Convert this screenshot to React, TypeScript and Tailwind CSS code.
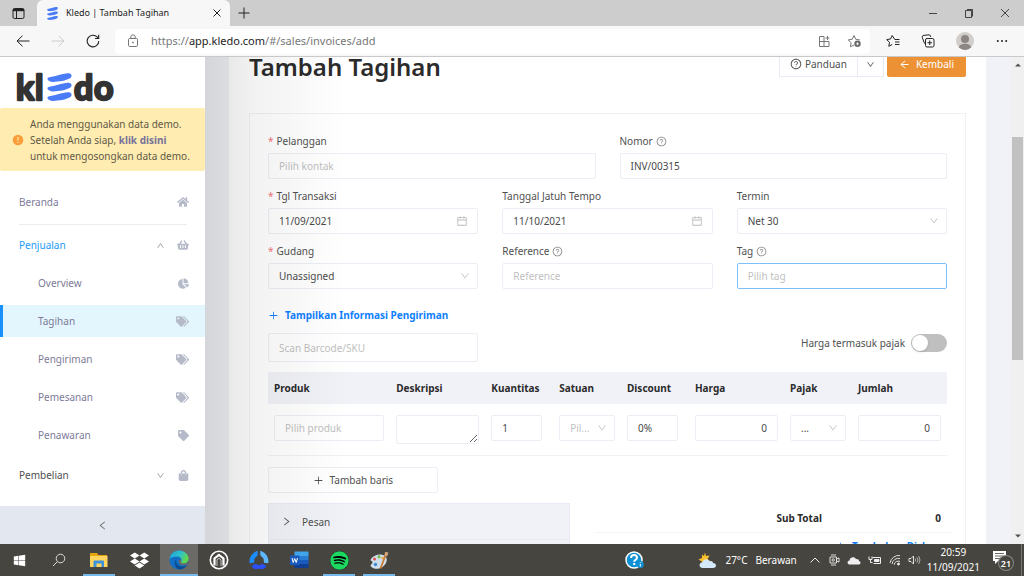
import { ReactNode, useState } from "react";
import { clsx } from "clsx";
import {
  FaChartPie,
  FaDropbox,
  FaHome,
  FaShoppingBag,
  FaShoppingBasket,
  FaSpotify,
  FaTag,
  FaTags,
  FaWindows,
} from "react-icons/fa";
import {
  AiOutlineArrowLeft,
  AiOutlineCalendar,
  AiOutlineDown,
  AiOutlineLeft,
  AiOutlinePlus,
  AiOutlineQuestionCircle,
  AiOutlineRight,
  AiOutlineUp,
} from "react-icons/ai";

const salesMenu = [
  { name: "Overview", icon: FaChartPie },
  { name: "Tagihan", icon: FaTags },
  { name: "Pengiriman", icon: FaTags },
  { name: "Pemesanan", icon: FaTags },
  { name: "Penawaran", icon: FaTag },
];

const columns = [
  "Produk",
  "Deskripsi",
  "Kuantitas",
  "Satuan",
  "Discount",
  "Harga",
  "Pajak",
  "Jumlah",
];

const inputStyle =
  "h-[26px] w-full rounded-xs border border-[#eceef5] bg-transparent px-2.5 text-[#4a4a4a] outline-none placeholder:text-[#bfbfbf]";

export default function App() {
  return (
    <div className="flex h-screen w-full flex-col overflow-hidden bg-white font-['Noto_Sans',sans-serif] text-[10px] leading-4 text-[#505050]">
      <TabStrip />
      <Toolbar />
      <div className="flex min-h-0 flex-1">
        <Sidebar />
        <main className="relative min-w-0 flex-1 overflow-hidden bg-[#f1f2f7] pr-[25px] pl-6">
          <InvoicePage />
          <div className="pointer-events-none absolute inset-y-0 left-0 w-36 bg-linear-to-r from-black/12 via-black/5 via-35% to-transparent" />
        </main>
        <Scrollbar />
      </div>
      <Taskbar />
    </div>
  );
}

function TabStrip() {
  return (
    <header className="flex h-[26px] shrink-0 items-center bg-[#cdcdcd] text-[#222]">
      <button aria-label="Tab actions" className="flex w-[37px] justify-center">
        <svg width="13" height="13" viewBox="0 0 13 13" fill="none" stroke="currentColor">
          <rect x="1" y="1.5" width="11" height="10" rx="1.5" />
          <path d="M1 3h11" strokeWidth="2.4" />
          <path d="M4.5 4v7.500" />
        </svg>
      </button>
      <div className="flex h-full w-[193px] items-center rounded-t-md bg-[#f7f7f7] pr-2 pl-2.5 text-[9px]">
        <Stripes className="h-[13px] w-[11px]" />
        <span className="ml-2 flex-1 truncate">Kledo | Tambah Tagihan</span>
        <button aria-label="Close tab">
          <svg width="10" height="10" viewBox="0 0 10 10" stroke="currentColor">
            <path d="M1.500 1.500l7 7M8.500 1.500l-7 7" />
          </svg>
        </button>
      </div>
      <button aria-label="New tab" className="ml-2">
        <svg width="12" height="12" viewBox="0 0 12 12" stroke="currentColor">
          <path d="M6 .5v11M.5 6h11" />
        </svg>
      </button>
      <div className="ml-auto flex items-center gap-[26px] pr-3.5">
        <button aria-label="Minimize">
          <svg width="10" height="10" viewBox="0 0 10 10" stroke="currentColor" strokeWidth=".8">
            <path d="M1 5.500h8" />
          </svg>
        </button>
        <button aria-label="Restore">
          <svg width="10" height="10" viewBox="0 0 10 10" fill="none" stroke="currentColor" strokeWidth=".8">
            <path d="M1.500 2.500h6v7h-6z" />
            <path d="M3 1.500h5.500v7" />
          </svg>
        </button>
        <button aria-label="Close">
          <svg width="10" height="10" viewBox="0 0 10 10" stroke="currentColor" strokeWidth=".8">
            <path d="M1 1l8 8M9 1l-8 8" />
          </svg>
        </button>
      </div>
    </header>
  );
}

function Toolbar() {
  return (
    <nav className="flex h-[31px] shrink-0 items-center border-b border-[#c9c9c9] bg-[#f7f7f7] text-[#222]">
      <button aria-label="Back" className="ml-4">
        <svg width="14" height="12" viewBox="0 0 14 12" fill="none" stroke="currentColor">
          <path d="M13.500 6H1M6.500 .7L1 6l5.500 5.300" />
        </svg>
      </button>
      <button aria-label="Forward" className="ml-[21px] text-[#ccc]">
        <svg width="14" height="12" viewBox="0 0 14 12" fill="none" stroke="currentColor">
          <path d="M.5 6H13M7.500 .7L13 6l-5.500 5.300" />
        </svg>
      </button>
      <button aria-label="Refresh" className="ml-[21px]">
        <svg width="14" height="14" viewBox="0 0 14 14" fill="none" stroke="currentColor" strokeWidth="1.100">
          <path d="M12.800 7a5.800 5.800 0 1 1-1.700-4.100L12.500 4.300" />
          <path d="M12.700 .8v3.700H9" />
        </svg>
      </button>
      <div className="ml-[15px] flex h-[25px] flex-1 items-center rounded-sm bg-white pr-2 pl-3 text-[#777]">
        <svg width="12" height="14" viewBox="0 0 12 14" fill="none" stroke="currentColor">
          <rect x="1.500" y="4.500" width="9" height="8" rx="1.200" />
          <path d="M3.800 4.500V3a2.200 2.200 0 0 1 4.400 0v1.500" />
          <circle cx="6" cy="8.500" r=".5" fill="currentColor" />
        </svg>
        <p className="ml-3 flex-1 text-[11px]">
          https://<span className="text-[#222]">app.kledo.com</span>/#/sales/invoices/add
        </p>
        <button aria-label="Apps">
          <svg width="13" height="13" viewBox="0 0 13 13" fill="none" stroke="currentColor">
            <path d="M1.500 1.500h4.500v10H1.500zM1.500 6.500h9.500v5H6M9.500 1v4M7.500 3h4" />
          </svg>
        </button>
        <button aria-label="Add to favorites" className="ml-4">
          <svg width="15" height="14" viewBox="0 0 15 14" fill="none" stroke="currentColor">
            <path d="M7 11l-3.600 1.800.7-4L1.200 5.900l4-.6L7 1.500l1.800 3.800 4 .6" />
            <circle cx="10.500" cy="9.800" r="3.200" fill="#666" stroke="none" />
            <path d="M10.500 8.200v3.200M8.900 9.800h3.200" stroke="#fff" strokeWidth=".8" />
          </svg>
        </button>
      </div>
      <div className="ml-4 flex items-center gap-[18px] pr-4">
        <button aria-label="Favorites">
          <svg width="14" height="14" viewBox="0 0 14 14" fill="none" stroke="currentColor">
            <path d="M8.500 5L6.200 1.500 4.500 5l-3.800.6 2.800 2.700-.7 4L6.200 10.500" />
            <path d="M8.500 5.500h5M9 8h4.500M9 10.500h4.500" />
          </svg>
        </button>
        <button aria-label="Collections" className="ml-[3px]">
          <svg width="14" height="14" viewBox="0 0 14 14" fill="none" stroke="currentColor">
            <rect x="4.500" y="4.500" width="8.500" height="8.500" rx="1.500" />
            <path d="M3.500 9.500L1.200 3.200Q1 2 2 1.500L8 .8Q9.500 .8 9.800 3M8.750 6.500v4.500M6.500 8.750H11" />
          </svg>
        </button>
        <button aria-label="Profile" className="ml-[3px] overflow-hidden rounded-full">
          <svg width="18" height="18" viewBox="0 0 18 18" fill="#8b8683">
            <rect width="18" height="18" fill="#d0cdca" />
            <circle cx="9" cy="7" r="4" />
            <ellipse cx="9" cy="15" rx="6" ry="3.200" />
          </svg>
        </button>
        <button aria-label="Menu" className="ml-1">
          <svg width="12" height="4" viewBox="0 0 12 4" fill="currentColor">
            <circle cx="1.800" cy="2" r="1" />
            <circle cx="6" cy="2" r="1" />
            <circle cx="10.200" cy="2" r="1" />
          </svg>
        </button>
      </div>
    </nav>
  );
}

function Stripes({ className }: { className?: string }) {
  return (
    <svg viewBox="0 0 25 28" className={className} fill="#4a7cf7" preserveAspectRatio="none">
      <path d="M1.500 4.500C7 3.500 15 .8 21 .2c4-.4 4.500 3.600 2 5.100-4 2.400-12 3.700-17.500 3.600C1 8.800-1 5.300 1.500 4.500z" />
      <path d="M1.500 14C7 13 15 10.300 21 9.700c4-.4 4.500 3.600 2 5.100-4 2.400-12 3.700-17.500 3.600C1 18.300-1 14.800 1.500 14z" />
      <path d="M1.500 23.500C7 22.500 15 19.800 21 19.200c4-.4 4.500 3.600 2 5.100-4 2.400-12 3.700-17.500 3.600-4.500-.1-6.500-3.600-4-4.400z" />
    </svg>
  );
}

function Sidebar() {
  const [open, setOpen] = useState(true);

  return (
    <aside className="flex w-[205px] shrink-0 flex-col bg-white text-[#7d7b99]">
      <a href="#home" aria-label="kledo" className="flex h-[51px] items-end pl-4">
        <svg width="102" height="48" viewBox="0 0 102 48" className="overflow-visible">
          <g
            fill="#333"
            stroke="#333"
            strokeWidth="2.4"
            strokeLinejoin="round"
            className="font-['Lato',sans-serif] text-[34px] font-bold"
          >
            <text x="0" y="40">k</text>
            <text x="19" y="40">l</text>
            <text x="58" y="40">d</text>
            <text x="78" y="40">o</text>
          </g>
          <svg x="31" y="13" width="25" height="28">
            <Stripes />
          </svg>
        </svg>
      </a>
      <div className="flex h-[63px] items-center rounded-xs bg-[#ffecb0] pl-3 text-[#5f5a48]">
        <svg width="12" height="12" viewBox="0 0 12 12" className="shrink-0">
          <circle cx="6" cy="6" r="5.300" fill="#fa9d3b" />
          <path d="M6 3v3.600M6 7.800V9" stroke="#ffecb0" strokeWidth="1.100" />
        </svg>
        <p className="ml-1.5 whitespace-nowrap">
          Anda menggunakan data demo.
          <br />
          Setelah Anda siap,{" "}
          <a href="#reset" className="font-bold text-[#77719a]">
            klik disini
          </a>
          <br />
          untuk mengosongkan data demo.
        </p>
      </div>
      <ul className="mt-[15px] flex-1">
        <li>
          <a href="#home" className="flex h-8 items-center pr-4 pl-[19px]">
            <span className="flex-1">Beranda</span>
            <FaHome size={12} className="text-[#b5bac9]" />
          </a>
        </li>
        <li className="mt-1.5 mr-[18px] mb-1 ml-[19px] border-b border-[#ebebf0]" />
        <li>
          <button
            onClick={() => setOpen(!open)}
            className="flex h-8 w-full items-center pr-4 pl-[19px] text-left text-[#1c9bf7]"
          >
            <span className="flex-1">Penjualan</span>
            {open ? (
              <AiOutlineUp size={9} className="text-[#999]" />
            ) : (
              <AiOutlineDown size={9} className="text-[#999]" />
            )}
            <FaShoppingBasket size={12} className="ml-3 text-[#b5bac9]" />
          </button>
          {open && (
            <ul className="mt-1.5 flex flex-col gap-1.5">
              {salesMenu.map(({ name, icon: Icon }) => (
                <li key={name}>
                  <a
                    href={`#${name}`}
                    className={clsx(
                      "flex h-8 items-center border-l-3 pr-4 pl-[35px]",
                      name === "Tagihan" ? "border-[#1890ff] bg-[#e3f6fe]" : "border-transparent",
                    )}
                  >
                    <span className="flex-1">{name}</span>
                    <Icon
                      size={name === "Overview" || name === "Penawaran" ? 11 : 13}
                      className="text-[#b5bac9]"
                    />
                  </a>
                </li>
              ))}
            </ul>
          )}
        </li>
        <li className="mt-2">
          <button className="flex h-8 w-full items-center pr-4 pl-[19px] text-left text-[#505050]">
            <span className="flex-1">Pembelian</span>
            <AiOutlineDown size={9} className="text-[#999]" />
            <FaShoppingBag size={11} className="ml-[13px] text-[#b5bac9]" />
          </button>
        </li>
      </ul>
      <button
        aria-label="Collapse"
        className="flex h-[38px] shrink-0 items-center justify-center bg-[#e2e7f0] text-[#666]"
      >
        <AiOutlineLeft size={11} />
      </button>
    </aside>
  );
}

function Field({
  id,
  label,
  required,
  help,
  children,
}: {
  id: string;
  label: string;
  required?: boolean;
  help?: boolean;
  children: ReactNode;
}) {
  return (
    <div className="flex flex-col gap-1">
      <label htmlFor={id} className="flex items-center gap-[3px]">
        {required && <span className="text-[#f5767a]">*</span>}
        {label}
        {help && <AiOutlineQuestionCircle size={11} className="text-[#888]" />}
      </label>
      {children}
    </div>
  );
}

function DateInput({ id, value }: { id: string; value: string }) {
  return (
    <div className="relative">
      <input id={id} defaultValue={value} className={inputStyle} />
      <AiOutlineCalendar size={12} className="absolute top-[7px] right-2.5 text-[#bbb]" />
    </div>
  );
}

function Select({ id, label, value, muted }: { id: string; label?: string; value: string; muted?: boolean }) {
  return (
    <div className="relative">
      <select
        id={id}
        aria-label={label}
        className={clsx(inputStyle, "appearance-none", muted && "text-[#bfbfbf]!")}
      >
        <option>{value}</option>
      </select>
      <AiOutlineDown
        size={10}
        className="pointer-events-none absolute top-2 right-2 text-[#bbb]"
      />
    </div>
  );
}

function InvoicePage() {
  return (
    <div className="-mt-2 box-content h-full bg-white px-5 pb-2">
      <div className="flex h-9 items-start justify-between">
        <h1 className="text-[24px] leading-9 font-semibold text-[#2b2b2b]">Tambah Tagihan</h1>
        <div className="flex">
          <button className="flex h-7 items-center gap-[3px] border border-[#e8ebf3] px-2.5 pt-0.5">
            <AiOutlineQuestionCircle size={12} />
            Panduan
          </button>
          <button
            aria-label="More guides"
            className="-ml-px h-7 border border-[#e8ebf3] px-2 pt-0.5"
          >
            <AiOutlineDown size={9} />
          </button>
          <button className="ml-[3px] flex h-7 items-center gap-1.5 rounded-xs bg-[#ec9235] px-3 pt-0.5 text-white">
            <AiOutlineArrowLeft size={11} />
            Kembali
          </button>
        </div>
      </div>

      <form className="mt-7 border border-[#f0f1f5] px-[18px] pt-[19px]">
        <div className="grid grid-cols-2 gap-x-6">
          <Field id="contact" label="Pelanggan" required>
            <input id="contact" placeholder="Pilih kontak" className={inputStyle} />
          </Field>
          <Field id="number" label="Nomor" help>
            <input id="number" defaultValue="INV/00315" className={inputStyle} />
          </Field>
        </div>
        <div className="mt-[9px] grid grid-cols-3 gap-x-6 gap-y-[9px]">
          <Field id="date" label="Tgl Transaksi" required>
            <DateInput id="date" value="11/09/2021" />
          </Field>
          <Field id="due" label="Tanggal Jatuh Tempo">
            <DateInput id="due" value="11/10/2021" />
          </Field>
          <Field id="term" label="Termin">
            <Select id="term" value="Net 30" />
          </Field>
          <Field id="warehouse" label="Gudang" required>
            <Select id="warehouse" value="Unassigned" />
          </Field>
          <Field id="reference" label="Reference" help>
            <input id="reference" placeholder="Reference" className={inputStyle} />
          </Field>
          <Field id="tag" label="Tag" help>
            <input
              id="tag"
              placeholder="Pilih tag"
              className={clsx(inputStyle, "border-[#7cc0fa]!")}
            />
          </Field>
        </div>

        <button
          type="button"
          className="mt-[17px] flex h-[18px] items-center gap-1.5 font-bold text-[#0f7fff]"
        >
          <AiOutlinePlus size={11} />
          Tampilkan Informasi Pengiriman
        </button>

        <div className="mt-[9px] grid grid-cols-3 items-start gap-x-6">
          <input
            aria-label="Scan Barcode/SKU"
            placeholder="Scan Barcode/SKU"
            className={clsx(inputStyle, "h-[29px]!")}
          />
          <label className="col-span-2 flex h-5 items-center justify-end gap-1.5">
            Harga termasuk pajak
            <input
              type="checkbox"
              role="switch"
              className="h-[18px] w-9 appearance-none rounded-full bg-[#bfbfbf] p-px before:block before:size-4 before:rounded-full before:bg-white before:shadow-sm checked:bg-[#1890ff] checked:before:ml-[18px]"
            />
          </label>
        </div>

        <LineItems />

        <button
          type="button"
          className="mt-[11px] flex h-[26px] w-1/4 items-center justify-center gap-1.5 rounded-xs border border-[#eceef5]"
        >
          <AiOutlinePlus size={11} />
          Tambah baris
        </button>

        <div className="mt-2.5 flex items-start">
          <div className="w-4/9 border border-[#e8ebf3] bg-[#f1f2f7]">
            <button
              type="button"
              className="flex h-9 w-full items-center gap-2.5 border-b border-[#e8ebf3] px-3"
            >
              <AiOutlineRight size={11} />
              Pesan
            </button>
            <button type="button" className="flex h-9 w-full items-center gap-2.5 px-3">
              <AiOutlineRight size={11} />
              Attachment
            </button>
          </div>
          <div className="-mr-1.5 ml-[26px] flex-1">
            <div className="grid h-[30px] grid-cols-4 items-center border-b border-[#f3f4f8] pr-3 font-bold text-[#2b2b2b]">
              <span className="col-start-3 pl-2">Sub Total</span>
              <span className="text-right">0</span>
            </div>
            <button
              type="button"
              className="ml-auto flex h-[26px] items-center gap-1.5 pr-3 font-bold text-[#0f7fff]"
            >
              <AiOutlinePlus size={11} />
              Tambahan Diskon
            </button>
          </div>
        </div>
      </form>
    </div>
  );
}

function LineItems() {
  return (
    <table className="mt-2.5 w-full table-fixed border-b border-[#f0f1f5]">
      <colgroup>
        <col className="w-[18%]" />
        <col className="w-[14%]" />
        <col className="w-[10%]" />
        <col className="w-[10%]" />
        <col className="w-[10%]" />
        <col className="w-[14%]" />
        <col className="w-[10%]" />
        <col className="w-[14%]" />
      </colgroup>
      <thead>
        <tr className="h-8 bg-[#f1f2f7] text-left text-[#2b2b2b]">
          {columns.map((column) => (
            <th key={column} className="px-1.5 font-bold">
              {column}
            </th>
          ))}
        </tr>
      </thead>
      <tbody>
        <tr className="align-top [&>td]:px-1.5 [&>td]:py-[11px]">
          <td>
            <input aria-label="Produk" placeholder="Pilih produk" className={inputStyle} />
          </td>
          <td>
            <textarea aria-label="Deskripsi" className={clsx(inputStyle, "block h-[29px]!")} />
          </td>
          <td>
            <input
              aria-label="Kuantitas"
              defaultValue="1"
              className={clsx(inputStyle, "max-w-[51px]")}
            />
          </td>
          <td>
            <Select id="unit" label="Satuan" value="Pil..." muted />
          </td>
          <td>
            <input
              aria-label="Discount"
              defaultValue="0%"
              className={clsx(inputStyle, "max-w-[51px]")}
            />
          </td>
          <td>
            <input aria-label="Harga" defaultValue="0" className={clsx(inputStyle, "text-right")} />
          </td>
          <td>
            <Select id="tax" label="Pajak" value="..." />
          </td>
          <td>
            <input aria-label="Jumlah" defaultValue="0" className={clsx(inputStyle, "text-right")} />
          </td>
        </tr>
      </tbody>
    </table>
  );
}

function Scrollbar() {
  return (
    <div className="flex w-[13px] shrink-0 flex-col items-center bg-[#f0f0f0] py-1.5">
      <svg width="6" height="4" viewBox="0 0 6 4" fill="#505050">
        <path d="M0 3.500L3 .5l3 3z" />
      </svg>
      <div className="my-1.5 flex w-full flex-1 flex-col px-px">
        <div className="h-[14%]" />
        <div className="h-[49%] bg-[#c1c1c1]" />
      </div>
      <svg width="6" height="4" viewBox="0 0 6 4" fill="#505050">
        <path d="M0 .5l3 3 3-3z" />
      </svg>
    </div>
  );
}

function TaskButton({
  label,
  running,
  active,
  children,
}: {
  label: string;
  running?: boolean;
  active?: boolean;
  children: ReactNode;
}) {
  return (
    <button
      aria-label={label}
      className={clsx(
        "flex h-full items-center justify-center border-b-2 pt-0.5",
        active ? "mx-px w-[38px] bg-[#6b6a66]" : "mx-1 w-8",
        running ? "border-[#76b9ed]" : "border-transparent",
      )}
    >
      {children}
    </button>
  );
}

function Taskbar() {
  return (
    <footer className="flex h-8 shrink-0 items-center bg-[#474540] text-white">
      <div className="-ml-px flex h-full">
        <TaskButton label="Start">
          <FaWindows size={13} />
        </TaskButton>
        <TaskButton label="Search">
          <svg width="14" height="14" viewBox="0 0 14 14" fill="none" stroke="#ddd">
            <circle cx="8.500" cy="5.500" r="4.300" />
            <path d="M5.300 8.700L1 13" />
          </svg>
        </TaskButton>
        <TaskButton label="Explorer" running>
          <svg width="18" height="16" viewBox="0 0 18 16">
            <path d="M0 1h7l1.500 2H17v4H0z" fill="#e5a50e" />
            <rect x="0" y="4" width="17.500" height="11" rx=".5" fill="#ffd45e" />
            <path d="M3.500 15V9.500q0-1 1-1h8.500q1 0 1 1V15h-2.500v-3.500h-5V15z" fill="#3b93dc" />
          </svg>
        </TaskButton>
        <TaskButton label="Dropbox">
          <FaDropbox size={19} />
        </TaskButton>
        <TaskButton label="Edge" running active>
          <svg width="20" height="20" viewBox="0 0 20 20">
            <defs>
              <linearGradient id="edge-top" x1="0" y1="0" x2="1" y2=".4">
                <stop offset="0" stopColor="#1f9fe0" />
                <stop offset=".6" stopColor="#2fc3c8" />
                <stop offset="1" stopColor="#62d84f" />
              </linearGradient>
            </defs>
            <circle cx="10" cy="10" r="9.600" fill="#1170c6" />
            <path
              d="M.5 9.500C1 4 5 .4 10 .4c5.500 0 9.600 4 9.600 8.300 0 3-2.200 4.800-5 4.800-2 0-3.200-.8-2.600-1.600 1.800-2.600-.6-5.300-4-5.300-3.700 0-6.500 1.200-7.500 2.900z"
              fill="url(#edge-top)"
            />
            <path
              d="M8 8.500c-1.800 2.500-.8 7 4 7.800 2.500.4 4.700-.3 6.300-1.500A9.600 9.600 0 0 1 10 19.600C6.300 18.500 3.500 12 8 8.500z"
              fill="#0b4f92"
            />
            <path
              d="M12 11.900c-.6.800.6 1.600 2.600 1.600 2 0 3.600-.8 4.400-2.200l.3 1.700c-1.500 2-4.300 2.700-6.800 2-2.500-.8-3.400-3.600-2.500-5.600 1.500-.2 2.800 1 2 2.500z"
              fill="#6b6a66"
            />
          </svg>
        </TaskButton>
        <TaskButton label="Nox">
          <svg width="20" height="20" viewBox="0 0 20 20" fill="none">
            <circle cx="10" cy="10" r="8.700" stroke="#fff" strokeWidth="1.600" />
            <path
              d="M5.500 15.500V8.500L10 5l4.500 3.500v7"
              stroke="#fff"
              strokeWidth="2.200"
            />
            <path d="M8 16V9.800l2-1.500 2 1.500V16" stroke="#fff" strokeWidth=".7" />
          </svg>
        </TaskButton>
        <TaskButton label="Hub">
          <svg width="20" height="20" viewBox="0 0 20 20">
            <path d="M8.700 .8v4.500L5.500 8.500 5 12.800l-4.300.4C-.2 8.500 2.500 2.800 8.700 .8z" fill="#1b8dfa" />
            <path d="M11.300 .8v4.500l3.200 3.200.5 4.300 4.300.4C20.200 8.500 17.500 2.800 11.300 .8z" fill="#5cb7ff" />
            <path
              d="M2.500 16l3.700-2.200L10 15.200l3.800-1.400L17.500 16c-1 2.500-4 3.500-5.500 3L10 18.500 8 19c-1.500.5-4.500-.5-5.500-3z"
              fill="#2b50f5"
            />
          </svg>
        </TaskButton>
        <TaskButton label="Word">
          <svg width="19" height="18" viewBox="0 0 19 18">
            <rect x="4.500" y=".5" width="14" height="5" fill="#41a5ee" />
            <rect x="4.500" y="5" width="14" height="4.500" fill="#2b7cd3" />
            <rect x="4.500" y="9" width="14" height="4.500" fill="#185abd" />
            <rect x="4.500" y="13" width="14" height="4" fill="#103f91" />
            <rect x="0" y="4.500" width="9.500" height="9.500" rx=".8" fill="#185abd" />
            <path d="M2 7l1.200 4.500L4.700 7.500l1.500 4L7.500 7" fill="none" stroke="#fff" />
          </svg>
        </TaskButton>
        <TaskButton label="Spotify" running>
          <span className="rounded-full bg-black">
            <FaSpotify size={19} className="text-[#1ed760]" />
          </span>
        </TaskButton>
        <TaskButton label="Paint" running>
          <svg width="20" height="19" viewBox="0 0 20 19">
            <path
              d="M2 8C5 3.500 12 2 16 5c3.500 3 1.500 8-2.500 11-3.500 2.500-9 2.500-11.500-.5-1.500-2 2-2.500 1.500-4.500C3 9.500.8 10 2 8z"
              fill="#cfe0ec"
            />
            <circle cx="5.500" cy="8" r="1.500" fill="#e0564a" />
            <circle cx="10" cy="5.800" r="1.500" fill="#6cb845" />
            <circle cx="13.500" cy="7" r="1.300" fill="#f0a93a" />
            <circle cx="6.500" cy="13.500" r="1.700" fill="#3a8bd6" />
            <path d="M17 3L11.500 17.500" stroke="#c67b35" strokeWidth="1.800" />
            <path d="M15.500 4.500l.5-3.500 3.500.5-1.500 4z" fill="#d9a777" />
          </svg>
        </TaskButton>
      </div>

      <div className="ml-auto flex h-full items-center">
        <button aria-label="Help" className="mr-[54px]">
          <svg width="19" height="18" viewBox="0 0 19 18">
            <circle cx="9" cy="9" r="8" fill="#0f8fd4" stroke="#fff" strokeWidth="1.500" />
            <path
              d="M6 7q0-3 3-3t3 2.700c0 2-2.800 2-2.800 4M9.200 12v2"
              fill="none"
              stroke="#fff"
              strokeWidth="2"
            />
            <circle cx="15.300" cy="13.500" r="3.500" fill="#0f8fd4" />
            <path d="M15.300 13v2.500M15.300 11.300v.8" stroke="#fff" />
          </svg>
        </button>
        <button className="flex items-center">
          <svg width="19" height="17" viewBox="0 0 19 17">
            <path
              d="M7 .5L8 4l3.500-.5L9.500 7l2.500 2-5 3L3 9 .5 7.500 4 6V2.500L6 4z"
              fill="#fbc02d"
            />
            <path
              d="M5 16c-4.500 0-4.500-5.500-.5-5.800C5 7 10 6 11.500 9.500c1.500-1 3.500 0 3.500 1.500 4 .2 4 5 0 5z"
              fill="#d4e9f9"
            />
          </svg>
          <span className="ml-2">27°C</span>
          <span className="ml-2">Berawan</span>
        </button>
        <div className="ml-3 flex items-center gap-[7px] text-[#eee]">
          <svg width="12" height="12" viewBox="0 0 12 12" fill="none" stroke="currentColor">
            <path d="M1.500 8.500L6 4l4.500 4.500" />
          </svg>
          <svg width="12" height="12" viewBox="0 0 12 12" fill="none" stroke="currentColor" strokeWidth=".9">
            <path d="M3 1h5M3 11h5M2 3h6.500v6H2zM8.500 5l2.500-1v4L8.500 7" />
            <circle cx="5.200" cy="6" r="1.200" />
          </svg>
          <svg width="14" height="9" viewBox="0 0 14 9" fill="currentColor">
            <path d="M3 8.500C0 8.500-.3 4.800 2.500 4.500 3 1 7.500 0 9 3.200c2-.4 3 .8 3 1.800 2.200.3 2 3.500-.2 3.500z" />
          </svg>
          <svg width="14" height="11" viewBox="0 0 14 11" fill="none" stroke="currentColor">
            <path d="M4.500 2.500h8v6h-7" />
            <path d="M6.500 4.500h4.500v2H6.500z" fill="currentColor" />
            <path d="M1 1.500v3h3v-3M2.500 4.500v3h2" />
          </svg>
          <svg width="12" height="12" viewBox="0 0 12 12" fill="none" stroke="currentColor" strokeWidth=".9">
            <path d="M1 9A9 9 0 0 1 11 1.500M3 10A6.500 6.500 0 0 1 11 4.500M5.200 10.800A4 4 0 0 1 11 7.500" />
            <circle cx="9.500" cy="10" r="1" fill="currentColor" />
          </svg>
          <svg width="13" height="12" viewBox="0 0 13 12" fill="none" stroke="currentColor" strokeWidth=".9">
            <path d="M1 4.500h2l2.500-2.500v8L3 7.500H1z" />
            <path
              d="M7.200 4.500q1 1.500 0 3M9 3.300q1.800 2.700 0 5.400M10.800 2.200q2.400 3.800 0 7.600"
              opacity=".7"
            />
          </svg>
        </div>
        <div className="ml-1.5 text-center leading-[15px]">
          <p>20:59</p>
          <p>11/09/2021</p>
        </div>
        <button
          aria-label="Notifications"
          className="relative mr-2 ml-3 flex h-5 w-[21px] items-start"
        >
          <svg width="15" height="15" viewBox="0 0 15 15">
            <path d="M1 1h13v10H6l-3 3v-3H1z" fill="#fff" />
            <path d="M3 3.500h9M3 6h9M3 8.500h6" stroke="#474540" strokeWidth=".8" />
          </svg>
          <span className="absolute right-0 bottom-0 flex size-3.5 items-center justify-center rounded-full bg-[#474540] text-[9px] leading-none font-semibold ring-1 ring-[#888]">
            21
          </span>
        </button>
        <span className="h-full w-[3px] border-l border-[#77756f]" />
      </div>
    </footer>
  );
}
